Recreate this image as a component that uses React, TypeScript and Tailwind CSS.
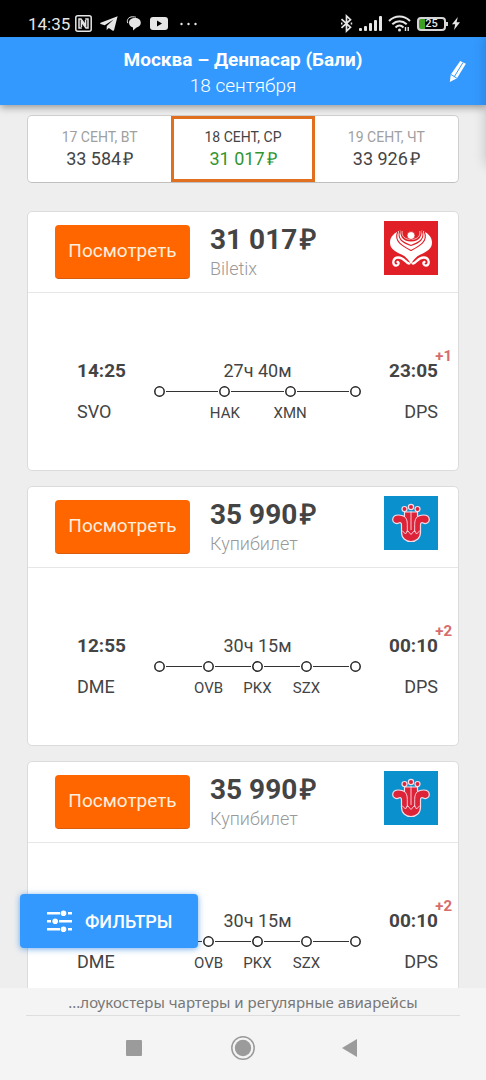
import React from 'react';

interface DateOption {
  label: string;
  price: string;
  active?: boolean;
}

interface Ticket {
  price: string;
  agency: string;
  airline: 'hainan' | 'southern';
  departTime: string;
  departCode: string;
  arriveTime: string;
  arriveCode: string;
  dayShift: string;
  duration: string;
  stops: string[];
}

const dates: DateOption[] = [
  { label: '17 СЕНТ, ВТ', price: '33 584' },
  { label: '18 СЕНТ, СР', price: '31 017', active: true },
  { label: '19 СЕНТ, ЧТ', price: '33 926' }
];

const tickets: Ticket[] = [
  {
    price: '31 017',
    agency: 'Biletix',
    airline: 'hainan',
    departTime: '14:25',
    departCode: 'SVO',
    arriveTime: '23:05',
    arriveCode: 'DPS',
    dayShift: '+1',
    duration: '27ч 40м',
    stops: ['HAK', 'XMN']
  },
  {
    price: '35 990',
    agency: 'Купибилет',
    airline: 'southern',
    departTime: '12:55',
    departCode: 'DME',
    arriveTime: '00:10',
    arriveCode: 'DPS',
    dayShift: '+2',
    duration: '30ч 15м',
    stops: ['OVB', 'PKX', 'SZX']
  },
  {
    price: '35 990',
    agency: 'Купибилет',
    airline: 'southern',
    departTime: '12:55',
    departCode: 'DME',
    arriveTime: '00:10',
    arriveCode: 'DPS',
    dayShift: '+2',
    duration: '30ч 15м',
    stops: ['OVB', 'PKX', 'SZX']
  }
];

const StatusBar: React.FC = () => (
  <div className="flex h-[37px] shrink-0 items-center justify-between bg-black pt-2.5 pr-[26px] pl-7 text-[#e6e6e6]">
    <div className="flex items-center">
      <span className="w-[47px] text-[17px] leading-[20px] whitespace-nowrap">14:35</span>
      <svg className="h-[17px] w-[17px]" viewBox="0 0 17 17" fill="none" stroke="currentColor">
        <rect x="0.8" y="0.8" width="15.4" height="15.4" rx="2" strokeWidth="1.5" />
        <path d="M6.800 13H4V4h2L10.600 10.500V5" strokeWidth="1.500" />
        <path d="M10.200 4H13v9h-2L6.400 6.500V12" strokeWidth="1.500" />
      </svg>
      <svg className="ml-2 h-[15px] w-[18px]" viewBox="0 0 18 15" fill="currentColor">
        <path d="M17.6.3.6 6.8c-.7.3-.6.9 0 1.1l4.1 1.3L13.6 3.6 6.8 10l-.2 4 2.2-2.1 4 2.8c.6.3 1.1.1 1.3-.6z" />
      </svg>
      <svg className="ml-2 h-[15px] w-[16px]" viewBox="0 0 16 15" fill="currentColor">
        <path d="M9 2c3.500 0 5.800 2 5.800 4.800 0 2.400-1.700 4.100-4.200 4.600L7 14.600v-3.200C4.500 10.800 3 9 3 6.800 3 4 5.500 2 9 2z" />
        <path d="M1.800 7.200C.2 3.500 3 .9 6.200.8c1.600 0 2.700.1 3.700.4" fill="none" stroke="currentColor" strokeWidth="1" />
      </svg>
      <svg className="ml-2 h-[13px] w-[18px]" viewBox="0 0 18 13">
        <rect width="18" height="13" rx="3" fill="currentColor" />
        <path d="M7 3.500v6l5-3z" fill="#000" />
      </svg>
      <svg className="ml-3 h-1 w-[17px]" viewBox="0 0 17 4" fill="currentColor">
        <circle cx="1.500" cy="2" r="1.200" />
        <circle cx="8.500" cy="2" r="1.200" />
        <circle cx="15.500" cy="2" r="1.200" />
      </svg>
    </div>
    <div className="flex items-center">
      <svg className="h-[19px] w-[13px]" viewBox="0 0 13 19" fill="none" stroke="currentColor" strokeWidth="1.700">
        <path d="M1.500 5.200 10.500 13.300 6.500 17V2l4 3.700-9 8.100" />
        <path d="M1 9.500h1.500M10.700 9.500h1.500" strokeWidth="2" />
      </svg>
      <svg className="ml-1.5 h-[15px] w-[23px]" viewBox="0 0 23 15" fill="currentColor">
        <rect x="0" y="12" width="3" height="3" rx="1" />
        <rect x="5" y="10" width="3" height="5" rx="1" />
        <rect x="10" y="7" width="3" height="8" rx="1" />
        <rect x="15" y="4" width="3" height="11" rx="1" />
        <rect x="20" y="0" width="3" height="15" rx="1" />
      </svg>
      <svg className="ml-1.5 h-[17px] w-[23px]" viewBox="0 0 23 17" fill="none" stroke="currentColor" strokeWidth="2">
        <path d="M1 6C7 .1 16 .1 22 6" />
        <path d="M4.300 9.300c4.300-4 10.100-4 14.400 0" />
        <path d="M7.500 12.400c2.400-2.200 5.600-2.200 8 0" />
        <circle cx="11.500" cy="15" r="1.500" fill="currentColor" stroke="none" />
        <path d="M17.500 12v4M20.200 12v4" strokeWidth="1.400" />
      </svg>
      <div className="ml-1.5 flex items-center">
        <div className="flex h-[14px] w-[29px] items-center justify-center rounded-[4px] border-2 border-[#d6d6d6] bg-linear-to-r from-[#3f9f22] from-25% to-black to-25% text-[11px] leading-[12px] font-medium">
          25
        </div>
        <div className="h-1 w-[2px] bg-[#d6d6d6]" />
      </div>
      <svg className="ml-1 h-[13px] w-2" viewBox="0 0 8 13" fill="currentColor">
        <path d="M5.800 0 0 7.300h3.200L2 13l6-7.700H4.600z" />
      </svg>
    </div>
  </div>
);

const HainanLogo: React.FC = () => (
  <svg className="h-[54px] w-[54px]" viewBox="0 0 54 54" role="img" aria-label="Hainan Airlines">
    <rect width="54" height="54" fill="#e01f26" />
    <path
      d="M17.500 9C10 11.500 6 16 6 21.500c0 6.500 5 9 11.500 12 4.500 2.200 7.500 5.500 9.500 10 2-4.500 5-7.800 9.500-10C43 30.500 48 28 48 21.500 48 16 44 11.500 36.500 9z"
      fill="#fff"
    />
    <path d="M16.500 8C15.500 14.500 18 20.500 27 20.500S38.500 14.500 37.500 8z" fill="#e01f26" />
    <g fill="none" stroke="#e01f26" strokeWidth="1.100">
      <path d="M15.800 9.500C12.800 18.500 19 21.500 27 24.500c8-3 14.200-6 11.200-15" />
      <path d="M13.800 10.500C9.500 20.500 18.500 25 27 29.500c8.500-4.500 17.500-9 13.200-19" />
    </g>
    <path d="M18.200 10c-1 5.500 3 8.500 8.800 8.500s9.800-3 8.800-8.500" fill="none" stroke="#fff" strokeWidth="0.700" />
    <circle cx="27" cy="14.500" r="4" fill="#fff" stroke="#e01f26" strokeWidth="0.800" />
    <g fill="none" stroke="#fff" strokeLinecap="round" strokeWidth="2.300">
      <path d="M25 42.500c-3.200-.5-5-6-10.800-6-5.800 0-6.300 7.600-2.400 8.100 2.700.3 3.700-2.800 1.700-3.700" />
      <path d="M29 42.500c3.200-.5 5-6 10.800-6 5.800 0 6.300 7.600 2.400 8.100-2.700.3-3.700-2.800-1.700-3.700" />
    </g>
  </svg>
);

const SouthernLogo: React.FC = () => (
  <svg className="h-[54px] w-[54px]" viewBox="0 0 54 54" role="img" aria-label="China Southern Airlines">
    <rect width="54" height="54" fill="#0a90cc" />
    <g fill="#dc2338" stroke="#f6dce6" strokeWidth="1.200" strokeLinejoin="round">
      <path d="M17.500 29c0-2.300-1.400-3-2.800-2-2.200 1.500-6-.2-6-3.300 0-3.200 2.800-4.700 6-4.700 2.500 0 4.300.6 5.800 1.600V16h13v4.600c1.500-1 3.300-1.600 5.800-1.600 3.200 0 6 1.500 6 4.700 0 3.100-3.800 4.800-6 3.300-1.400-1-2.800-.3-2.800 2V36c0 6-4 9.500-9.500 9.500s-9.500-3.500-9.500-9.500z" />
      <path d="M20.500 20.600c2 1.700 2.800 4 2.800 8V36M33.500 20.600c-2 1.700-2.800 4-2.800 8V36M27 15v19" fill="none" strokeWidth="0.900" />
      <path d="M18 34.500 21.500 38l2-3.500L27 38.500l3.500-4 2 3.500 3.500-3.500" fill="none" strokeWidth="0.900" />
      <circle cx="20.500" cy="13" r="2.500" />
      <circle cx="33.500" cy="13" r="2.500" />
      <circle cx="27" cy="11" r="2.600" />
    </g>
  </svg>
);

const PageHeader: React.FC = () => (
  <header className="z-10 grid h-[68px] shrink-0 grid-cols-[40px_1fr_40px] items-center bg-[#3399ff] px-2 text-white shadow-[0_2px_8px_rgba(0,0,0,0.4)]">
    <div className="col-start-2 pt-1 text-center">
      <h1 className="text-[19px] leading-[26px] font-bold">Москва – Денпасар (Бали)</h1>
      <p className="text-[19px] leading-[26px] font-light">18 сентября</p>
    </div>
    <button type="button" aria-label="Изменить поиск" className="flex justify-center">
      <svg className="h-6 w-[18px]" viewBox="0 0 18 24">
        <path d="M11.200 2 16.900 4.800 8 19.300.8 23l1-7.500z" fill="#fff" />
        <path d="M14 3.500 5 18.200M2 15.500l5.800 3.600" stroke="#3399ff" strokeWidth="1" fill="none" />
      </svg>
    </button>
  </header>
);

const Ruble: React.FC<{ large?: boolean }> = ({ large }) => (
  <span
    className={
      large
        ? "ml-[3px] font-['Liberation_Sans',sans-serif] text-[28px]"
        : "ml-[2px] font-['Liberation_Sans',sans-serif] text-[18px]"
    }
  >
    ₽
  </span>
);

const DateTabs: React.FC = () => (
  <div className="grid h-[68px] grid-cols-3 rounded-[5px] border border-[#cfcfcf] border-b-[#bfbfbf] bg-white">
    {dates.map((date) => (
      <button
        key={date.label}
        type="button"
        aria-pressed={!!date.active}
        className={
          date.active
            ? 'border-3 border-[#e07020] pb-[3px] text-[#30952f]'
            : 'border-3 border-transparent pb-[3px] text-[#444]'
        }
      >
        <span className={date.active ? 'block text-[14px] leading-[22px] text-[#444]' : 'block text-[14px] leading-[22px] text-[#a0a0a0]'}>
          {date.label}
        </span>
        <span className="block text-[18px] leading-[22px]">
          {date.price}
          <Ruble />
        </span>
      </button>
    ))}
  </div>
);

const StopDot: React.FC<{ label?: string }> = ({ label }) => (
  <li className="flex w-[11px] flex-col items-center">
    <svg className="h-[11px] w-[11px] shrink-0" viewBox="0 0 11 11" aria-hidden="true">
      <circle cx="5.500" cy="5.500" r="4.700" fill="none" stroke="#222" strokeWidth="1.500" />
    </svg>
    {label && <span className="mt-1.5 text-[15px] leading-[20px]">{label}</span>}
  </li>
);

const RouteLine: React.FC<{ stops: string[] }> = ({ stops }) => (
  <ol className="mt-[5px] flex">
    <StopDot />
    {stops.map((stop) => (
      <React.Fragment key={stop}>
        <li aria-hidden="true" className="mx-px mt-[5px] h-px flex-1 bg-[#333]" />
        <StopDot label={stop} />
      </React.Fragment>
    ))}
    <li aria-hidden="true" className="mx-px mt-[5px] h-px flex-1 bg-[#333]" />
    <StopDot />
  </ol>
);

const TicketCard: React.FC<{ ticket: Ticket }> = ({ ticket }) => (
  <article className="rounded-[5px] border border-[#dcdcdc] bg-white text-[#444]">
    <div className="flex h-[81px] items-center border-b border-[#e6e6e6] pr-5 pl-[27px]">
      <button
        type="button"
        className="h-[54px] w-[135px] shrink-0 rounded-[4px] border-b border-[#d95b0c] bg-[#ff6600] text-[19px] text-[#ffeedd]"
      >
        Посмотреть
      </button>
      <div className="ml-5 flex-1 pt-[3px]">
        <div className="text-[28px] leading-[30px] font-bold whitespace-nowrap">
          {ticket.price}
          <Ruble large />
        </div>
        <div className="text-[18px] leading-[28px] font-light text-[#999]">{ticket.agency}</div>
      </div>
      <div className="mt-[9px] self-start">{ticket.airline === 'hainan' ? <HainanLogo /> : <SouthernLogo />}</div>
    </div>
    <div className="grid grid-cols-[77px_1fr_77px] pt-[68px] pr-5 pb-[47px] pl-[49px] text-[18px] leading-[20px]">
      <div>
        <div className="text-[19px] font-bold">{ticket.departTime}</div>
        <div className="mt-[21px]">{ticket.departCode}</div>
      </div>
      <div>
        <div className="text-center">{ticket.duration}</div>
        <RouteLine stops={ticket.stops} />
      </div>
      <div className="text-right">
        <div className="relative text-[19px] font-bold">
          {ticket.arriveTime}
          <sup className="absolute -top-3.5 -right-3.5 text-[15px] leading-[18px] text-[#d66c6c]">{ticket.dayShift}</sup>
        </div>
        <div className="mt-[21px]">{ticket.arriveCode}</div>
      </div>
    </div>
  </article>
);

const FilterButton: React.FC = () => (
  <button
    type="button"
    className="absolute bottom-10 left-5 flex h-[54px] w-[178px] items-center rounded-[4px] bg-[#3399ff] pl-[27px] text-[18px] font-medium text-white shadow-[0_1px_6px_rgba(30,120,220,0.6)]"
  >
    <svg className="mr-3 h-[22px] w-[26px]" viewBox="0 0 26 22" fill="currentColor">
      <path d="M0 2h13v2.500H0zM21 2h4v2.500h-4zM0 10h4v2.500H0zM12 10h13v2.500H12zM0 18h13v2.500H0zM21 18h4v2.500h-4z" />
      <circle cx="16.500" cy="3.200" r="2.800" />
      <circle cx="8.200" cy="11.200" r="2.800" />
      <circle cx="16.500" cy="19.200" r="2.800" />
    </svg>
    ФИЛЬТРЫ
  </button>
);

const BottomBar: React.FC = () => (
  <footer className="shrink-0 bg-[#f4f4f4]">
    <p className="mx-[26px] h-7 border-b border-[#dedede] text-center font-['Noto_Sans',sans-serif] text-[15px] leading-[28px] whitespace-nowrap text-[#777]">
      ...лоукостеры чартеры и регулярные авиарейсы
    </p>
    <nav className="flex h-16 items-center justify-center gap-[84px] text-[#9b9b9b]">
      <button type="button" aria-label="Недавние">
        <svg className="h-6 w-6" viewBox="0 0 24 24" fill="currentColor">
          <rect x="3" y="4" width="16" height="16" rx="1" />
        </svg>
      </button>
      <button type="button" aria-label="Домой">
        <svg className="h-6 w-6" viewBox="0 0 24 24" fill="currentColor">
          <circle cx="12" cy="12" r="11.200" fill="none" stroke="currentColor" strokeWidth="1.500" />
          <circle cx="12" cy="12" r="8.200" />
        </svg>
      </button>
      <button type="button" aria-label="Назад">
        <svg className="h-6 w-6" viewBox="0 0 24 24" fill="currentColor">
          <path d="M18 3v18L3 12z" />
        </svg>
      </button>
    </nav>
  </footer>
);

export default function App() {
  return (
    <div className="flex h-screen flex-col overflow-hidden bg-[#eeeeee] font-['Roboto',sans-serif] text-[#444]">
      <StatusBar />
      <div className="relative flex min-h-0 flex-1 flex-col overflow-hidden">
        <PageHeader />
        <main className="relative flex min-h-0 flex-1 flex-col">
          <div className="min-h-0 flex-1 overflow-hidden px-[27px] pt-2.5">
            <DateTabs />
            <div className="mt-7 flex flex-col gap-[15px]">
              {tickets.map((ticket, index) => (
                <TicketCard key={index} ticket={ticket} />
              ))}
            </div>
          </div>
          <FilterButton />
        </main>
        {/* closed side menu, only its shadow reaches the screen */}
        <div aria-hidden="true" className="absolute top-0 left-full z-20 h-32 w-10 shadow-[0_0_12px_rgba(0,0,0,0.2)]" />
      </div>
      <BottomBar />
    </div>
  );
}
